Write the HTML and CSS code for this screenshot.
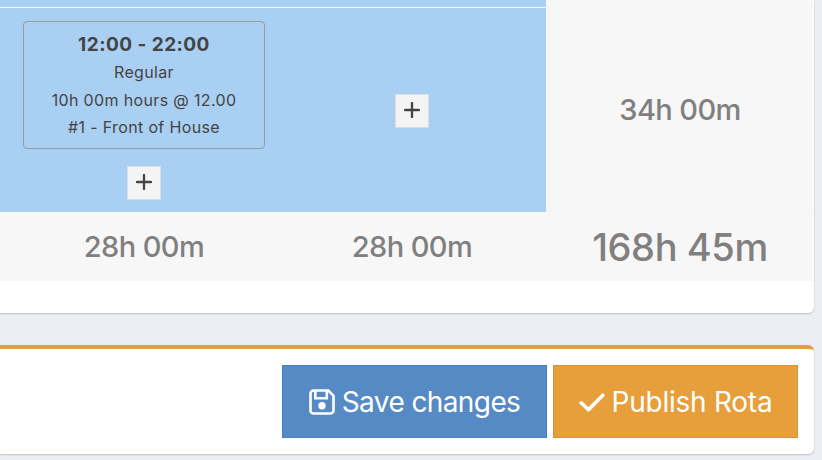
FILE: index.html
```html
<!DOCTYPE html>
<html lang="en">
<head>
  <meta charset="UTF-8" />
  <meta name="viewport" content="width=device-width, initial-scale=1.0" />
  <title>Rota</title>
  <link rel="stylesheet" href="styles.css">
</head>
<body>

  <div class="box rota-box">
    <div class="rota-row previous">
      <div class="day"></div>
      <div class="day"></div>
      <div class="day"></div>
      <div class="total"></div>
    </div>

    <div class="rota-row shifts">
      <div class="day"></div>
      <div class="day">
        <div class="shift">
          <strong>12:00 - 22:00</strong>
          <span class="type">Regular</span>
          <span class="hours">10h 00m hours @ 12.00</span>
          <span class="area">#1 - Front of House</span>
        </div>
        <button class="add" aria-label="Add shift">
          <svg width="16" height="16" viewBox="0 0 16 16"><path d="M8 1v14M1 8h14" /></svg>
        </button>
      </div>
      <div class="day empty">
        <button class="add" aria-label="Add shift">
          <svg width="16" height="16" viewBox="0 0 16 16"><path d="M8 1v14M1 8h14" /></svg>
        </button>
      </div>
      <div class="total">34h 00m</div>
    </div>

    <div class="rota-row totals">
      <div></div>
      <div class="total">28h 00m</div>
      <div class="total">28h 00m</div>
      <div class="total grand">168h 45m</div>
    </div>
  </div>

  <div class="box actions">
    <button class="btn btn-primary">
      <svg width="26" height="26" viewBox="0 0 26 26">
        <path class="line" d="M4.5 1.5h14.8l5.2 5.2v14.8a3 3 0 0 1-3 3h-17a3 3 0 0 1-3-3v-17a3 3 0 0 1 3-3z" />
        <path class="line" d="M6.3 2v7.2h11.5V2" />
        <circle class="dot" cx="13" cy="16.7" r="3.7" />
      </svg>
      <span>Save changes</span>
    </button>
    <button class="btn btn-warning">
      <svg width="26" height="26" viewBox="0 0 26 26">
        <path class="check" d="M2.2 13.8l7.3 7L23.8 6.2" />
      </svg>
      <span>Publish Rota</span>
    </button>
  </div>

</body>
</html>
```

FILE: styles.css
```css
* { box-sizing: border-box; }

body {
  margin: 0;
  background: #ebeff4;
  font-family: Inter, "Liberation Sans", sans-serif;
  color: #444;
  height: 460px;
  overflow: hidden;
}

button { font-family: inherit; }

.box {
  width: 814px;
  background: #fff;
  box-shadow: 0 1px 2px rgba(0, 0, 0, 0.2);
}

.rota-box {
  height: 313px;
  border-radius: 0 0 6px 0;
}

.rota-row {
  display: grid;
  grid-template-columns: 10px 268px 268px 268px;
}

.previous { height: 7px; }

.shifts {
  height: 205px;
  border-top: 1px solid #f4f4f4;
}

.totals {
  height: 69px;
  background: #f7f7f7;
}

.day {
  background: #a9cff3;
  display: flex;
  flex-direction: column;
  align-items: center;
  justify-content: center;
}

.empty { padding-top: 2px; }

.shift {
  width: 242px;
  height: 128px;
  margin-bottom: 17px;
  padding-top: 9px;
  border: 1px solid #929da8;
  border-radius: 4px;
  display: flex;
  flex-direction: column;
  align-items: center;
  font-size: 16px;
  line-height: 28px;
  white-space: nowrap;
}

.shift strong {
  font-size: 19px;
  line-height: 27px;
  letter-spacing: 0.45px;
}

.shift span { letter-spacing: 0.35px; }

.shift .area { line-height: 26px; }

.add {
  width: 34px;
  height: 34px;
  padding: 0 0 2px;
  border: 1px solid #ddd;
  background: #f4f4f4;
  display: flex;
  align-items: center;
  justify-content: center;
}

.add path {
  stroke: #444;
  stroke-width: 2.3;
  stroke-linecap: round;
}

.total {
  background: #f7f7f7;
  color: #808080;
  display: flex;
  align-items: center;
  justify-content: center;
  font-size: 29px;
  font-weight: 500;
  letter-spacing: -0.6px;
}

.shifts .total { border-bottom: 1px solid #f4f4f4; }

.grand {
  font-size: 38px;
  letter-spacing: -0.4px;
}

.actions {
  height: 109px;
  margin-top: 32px;
  padding: 16px 16px 0 0;
  border-top: 4px solid #e69f3b;
  border-radius: 0 6px 6px 0;
  display: flex;
  justify-content: flex-end;
  gap: 6px;
}

.btn {
  height: 73px;
  padding: 0;
  color: #fff;
  font-size: 28px;
  display: flex;
  align-items: center;
  justify-content: center;
  gap: 7px;
  white-space: nowrap;
}

.btn svg { flex: none; }

.btn-primary {
  width: 265px;
  background: #558ac4;
  border: 1px solid #437fbe;
  letter-spacing: -0.6px;
}

.btn-warning {
  width: 245px;
  background: #e69f3b;
  border: 1px solid #d8923a;
  letter-spacing: -0.25px;
}

.line {
  fill: none;
  stroke: #fff;
  stroke-width: 2.6;
}

.dot { fill: #fff; }

.check {
  fill: none;
  stroke: #fff;
  stroke-width: 3.6;
  stroke-linecap: round;
  stroke-linejoin: round;
}
```
